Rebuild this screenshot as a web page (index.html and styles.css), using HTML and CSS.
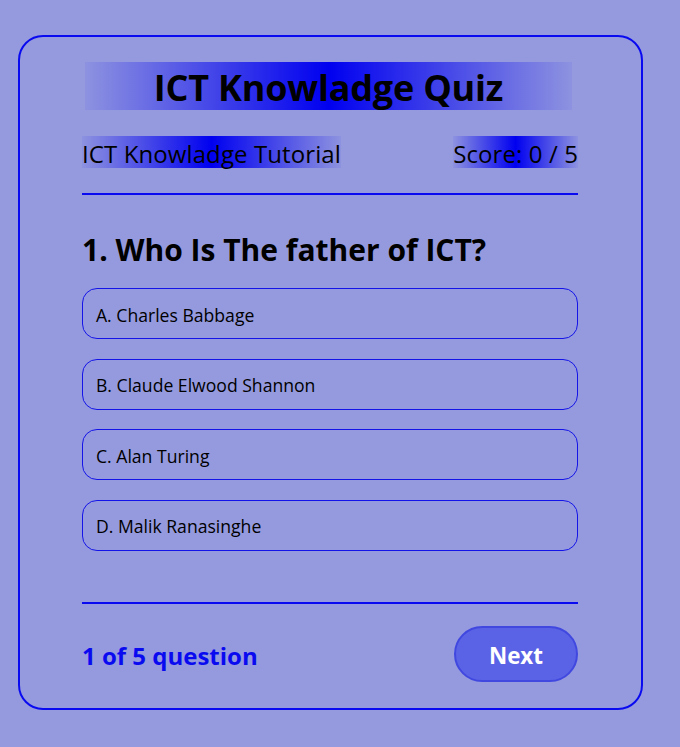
FILE: index.html
```html
<!DOCTYPE html>
<html lang="en">
<head>
<meta charset="utf-8">
<title>ICT Knowladge Quiz</title>
<link rel="stylesheet" href="styles.css">
</head>
<body>
<div class="app">
  <h1 class="title">ICT Knowladge Quiz</h1>
  <div class="header-row">
    <span class="band">ICT Knowladge Tutorial</span>
    <span class="band">Score: 0 / 5</span>
  </div>
  <div class="rule rule-top"></div>
  <h2 class="question">1. Who Is The father of ICT?</h2>
  <div class="options">
    <button class="option">A. Charles Babbage</button>
    <button class="option">B. Claude Elwood Shannon</button>
    <button class="option">C. Alan Turing</button>
    <button class="option">D. Malik Ranasinghe</button>
  </div>
  <div class="rule rule-bottom"></div>
  <div class="footer">
    <span class="progress">1 of 5 question</span>
    <button class="next">Next</button>
  </div>
</div>
</body>
</html>
```
FILE: styles.css
```css
* { box-sizing: border-box; }
html, body { margin: 0; padding: 0; }
body {
  background: #959ade;
  font-family: "Open Sans", "Noto Sans", sans-serif;
  color: #000;
  height: 747px;
  overflow: hidden;
}
.app {
  width: 625px;
  margin: 35px 0 0 18px;
  border: 2px solid #0a0af0;
  border-radius: 25px;
  padding: 25px 63px 26px 62px;
}
.title {
  margin: 0;
  height: 48px;
  line-height: 52px;
  font-size: 36px;
  font-weight: 700;
  text-align: center;
  background: linear-gradient(90deg, rgba(0,0,255,0.05), #0000f0 50%, rgba(0,0,255,0.05));
  margin-left: 3px;
  margin-right: 6px;
  letter-spacing: -0.2px;
}
.header-row {
  margin-top: 26px;
  display: flex;
  justify-content: space-between;
  height: 32px;
}
.band {
  font-size: 24px;
  font-weight: 500;
  height: 32px;
  padding-top: 3px;
  line-height: 29px;
  letter-spacing: 0.1px;
  background: linear-gradient(90deg, rgba(0,0,255,0.05), #0000f0 50%, rgba(0,0,255,0.05));
}
.rule {
  height: 2px;
  background: #0a0af0;
}
.rule-top { margin-top: 25px; }
.question {
  margin: 37px 0 20px;
  font-size: 30px;
  line-height: 36px;
  font-weight: 700;
}
.options {
  display: flex;
  flex-direction: column;
  gap: 19.67px;
}
.option {
  height: 51px;
  width: 100%;
  text-align: left;
  padding: 2px 13px 0;
  background: transparent;
  border: 1px solid #1414e8;
  border-radius: 15px;
  font-family: inherit;
  font-size: 17.6px;
  color: #000;
}
.rule-bottom { margin-top: 51px; }
.footer {
  margin-top: 22px;
  display: flex;
  justify-content: space-between;
  align-items: center;
  height: 56px;
}
.progress {
  color: #0a0af0;
  font-size: 24px;
  font-weight: 700;
  padding-top: 4px;
}
.next {
  width: 124px;
  height: 56px;
  border-radius: 28px;
  background: #5a62e6;
  border: 2px solid #4048e0;
  color: #fff;
  font-family: inherit;
  font-size: 22.4px;
  font-weight: 700;
  padding: 3px 0 0;
}
```
